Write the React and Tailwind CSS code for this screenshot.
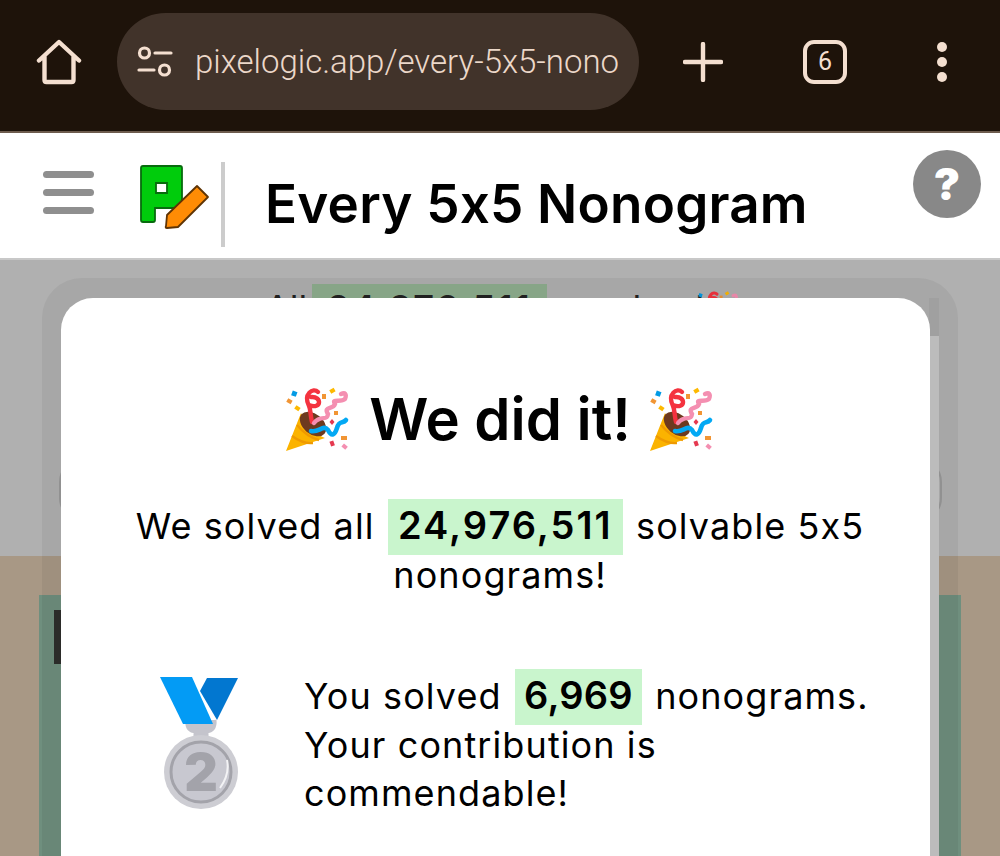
const Popper = ({ className }) => (
  <svg viewBox="0 0 66 66" className={className}>
    <path d="M1 65 L16 27 Q28 48 40 52 Z" fill="#fbb300" />
    <path d="M7 50 Q18 58 28 57 M12 39 Q22 51 34 54" stroke="#ef9a00" strokeWidth="2.400" fill="none" />
    <ellipse cx="28" cy="38" rx="15" ry="10" transform="rotate(40 28 38)" fill="#6d3a1f" />
    <path d="M27 36 C25 28 26 24 24 20 C18 8 28 1 33 6 M24 19 C37 24 37 10 26 11" stroke="#f4333f" strokeWidth="4.400" fill="none" strokeLinecap="round" />
    <path d="M29 37 C36 28 42 36 43 28 C38 20 48 24 50 18 C46 12 56 17 60 13 C62 8 60 6 56 8" stroke="#f48fb1" strokeWidth="4.400" fill="none" strokeLinecap="round" />
    <path d="M26 45 C34 47 38 38 43 44 C47 52 50 48 52 42 C54 34 58 38 61 34" stroke="#03a9f4" strokeWidth="4.600" fill="none" strokeLinecap="round" />
    <rect x="7" y="5" width="5" height="5" fill="#039be5" transform="rotate(20 9 7)" />
    <rect x="2" y="13" width="5" height="4" fill="#f19534" transform="rotate(30 4 15)" />
    <rect x="10" y="20" width="5" height="4" fill="#fdb900" transform="rotate(35 12 22)" />
    <rect x="37" y="8" width="4" height="5" fill="#f19534" />
    <rect x="45" y="3" width="5" height="4" fill="#fdb900" transform="rotate(-30 47 5)" />
    <rect x="49" y="25" width="4" height="4" fill="#f19534" />
    <path d="M47 33 L49.500 36 L47 39 L44.500 36 Z" fill="#e53950" />
    <rect x="56" y="50" width="6" height="4" fill="#f19534" />
    <rect x="45" y="55" width="4" height="5" fill="#e53950" transform="rotate(-20 47 57)" />
    <rect x="57" y="59" width="5" height="4" fill="#f48fb1" transform="rotate(40 60 61)" />
  </svg>
);

const Medal = ({ className }) => (
  <svg viewBox="0 0 80 134" className={className}>
    <path d="M47 2 L78 2 L57 44 L40 15 Z" fill="#0277d0" />
    <path d="M28 46 Q27 54 36 55 L36 62 L46 62 L46 55 Q55 54 54 44" stroke="#c4c4cc" strokeWidth="5" fill="#c4c4cc" />
    <path d="M0 1 L32 1 L53 48 L23 48 Z" fill="#039bf5" />
    <circle cx="41" cy="96" r="37" fill="#cdcdd3" />
    <circle cx="41" cy="96" r="30" fill="#c8c8d0" stroke="#a3a3aa" strokeWidth="3" />
    <path d="M67 84 Q70 98 60 112" stroke="#f3f3f5" strokeWidth="2" fill="none" />
    <text x="41" y="115" textAnchor="middle" fontSize="52" fontWeight="900" fill="#a3a3aa" fontFamily="Inter, sans-serif">2</text>
  </svg>
);

const Logo = () => (
  <svg viewBox="0 0 72 66" className="w-[72px] h-[66px]">
    <path d="M3 4 Q3 2 5 2 L42 2 Q44 2 44 4 L44 42 Q44 44 42 44 L17 44 L17 56 Q17 58 15 58 L5 58 Q3 58 3 56 Z M18 19 L18 29 L29 29 L29 19 Z" fill="#00cc0c" fillRule="evenodd" stroke="#086b0e" strokeWidth="1.800" />
    <path d="M59 22 L70 33 L40 63 L29 64 Q27 64 28 62 L29 51 Z" fill="#ff8c05" stroke="#5f3404" strokeWidth="1.800" strokeLinejoin="round" />
  </svg>
);

export default function App() {
  return (
    <div className="w-full h-[856px] flex flex-col overflow-hidden bg-white text-black font-['Inter',sans-serif] [font-feature-settings:'calt'_0]">
      {/* browser bar */}
      <div className="h-[133px] shrink-0 bg-[#1e130a] border-b-2 border-[#6d5c4e] flex items-center pl-[36px] pb-[8px] text-[#f4dfd0]">
        <svg viewBox="0 0 46 46" className="w-[46px] h-[46px]" fill="none" stroke="currentColor" strokeWidth="4.400" strokeLinejoin="round" strokeLinecap="round">
          <path d="M3 21.500 L23 3 L43 21.500 M8.500 17 L8.500 41 Q8.500 43 10.500 43 L35.500 43 Q37.500 43 37.500 41 L37.500 17" />
        </svg>
        <div className="ml-[35px] w-[522px] h-[97px] rounded-full bg-[#41332a] flex items-center pl-[20px] shrink-0">
          <svg viewBox="0 0 36 32" className="w-[36px] h-[32px] shrink-0" fill="none" stroke="currentColor" strokeWidth="3.200" strokeLinecap="round">
            <circle cx="7.500" cy="7" r="5" />
            <circle cx="27.500" cy="24" r="5" />
            <path d="M18 7 L34 7 M2 24 L17 24" />
          </svg>
          <div className="ml-[22px] w-[426px] overflow-hidden whitespace-nowrap text-[33px] font-['Roboto',sans-serif] font-light text-[#ecd8c9]">
            pixelogic.app/every-5x5-nono
          </div>
        </div>
        <svg viewBox="0 0 40 40" className="ml-[44px] w-[40px] h-[40px]" stroke="currentColor" strokeWidth="4.400" strokeLinecap="round">
          <path d="M20 2 L20 38 M2 20 L38 20" />
        </svg>
        <div className="ml-[80px] w-[44px] h-[44px] rounded-[11px] border-[4px] border-[#f4dfd0] flex items-center justify-center text-[25px] font-['Roboto',sans-serif] leading-none">
          6
        </div>
        <div className="ml-[90px] flex flex-col gap-[5px]">
          <div className="w-[10px] h-[10px] rounded-full bg-[#f4dfd0]" />
          <div className="w-[10px] h-[10px] rounded-full bg-[#f4dfd0]" />
          <div className="w-[10px] h-[10px] rounded-full bg-[#f4dfd0]" />
        </div>
      </div>

      {/* site header */}
      <div className="h-[127px] shrink-0 border-b-2 border-[#c8c8c8] flex pl-[43px] relative">
        <div className="flex flex-col gap-[11px] mt-[38px]">
          <div className="w-[51px] h-[7px] rounded-full bg-[#8f8f8f]" />
          <div className="w-[51px] h-[7px] rounded-full bg-[#8f8f8f]" />
          <div className="w-[51px] h-[7px] rounded-full bg-[#8f8f8f]" />
        </div>
        <div className="ml-[44px] mt-[31px]">
          <Logo />
        </div>
        <div className="ml-[11px] mt-[29px] w-[4px] h-[85px] bg-[#cccccc]" />
        <h1 className="ml-[40px] mt-[38px] text-[53px] leading-[66px] font-semibold tracking-[0.2px] whitespace-nowrap">Every 5x5 Nonogram</h1>
        <div className="absolute left-[913px] top-[17px] w-[68px] h-[68px] rounded-full bg-[#888888] flex items-center justify-center text-white text-[44px] font-black leading-none">
          ?
        </div>
      </div>

      {/* page behind the dialog */}
      <div className="relative flex-1 min-h-0 flex flex-col">
        <div className="h-[296px] shrink-0 bg-[#b0b0b0] overflow-hidden">
          <div className="ml-[265px] mt-[24px] flex items-start text-[36px] leading-[49px] text-[#222] whitespace-nowrap">
            <span className="w-[47px]">All</span>
            <span className="w-[235px] h-[56px] bg-[#8fae8f] text-center font-semibold tracking-[2px]">24,976,511</span>
            <span className="ml-[45px] w-[108px]">solved</span>
            <Popper className="w-[46px] h-[46px] mt-[6px] ml-[-6px]" />
          </div>
          <div className="ml-[59px] mt-[118px] w-[883px] h-[64px] rounded-[24px] border-2 border-[#999999]" />
        </div>
        <div className="flex-1 bg-[#a89885] px-[39px] pt-[39px]">
          <div className="h-full bg-[#6f8f7e] pl-[15px] pt-[15px]">
            <div className="w-[20px] h-[54px] bg-[#2e2e2c]" />
          </div>
        </div>

        {/* dialog shadow */}
        <div className="absolute left-[42px] right-[42px] top-[18px] bottom-0 rounded-t-[40px] bg-black/5" />

        {/* scrollbar */}
        <div className="absolute left-[929px] w-[10px] top-[38px] bottom-0 flex flex-col bg-[#bcbcbc]">
          <div className="h-[38px] bg-[#a0a0a0]" />
        </div>

        {/* dialog */}
        <div className="absolute left-[61px] w-[869px] top-[38px] bottom-0 rounded-t-[32px] overflow-hidden bg-white flex flex-col items-center pl-[9px]">
          <div className="mt-[88px] flex items-center gap-[18px]">
            <Popper className="w-[66px] h-[66px]" />
            <span className="text-[58px] leading-[66px] font-semibold whitespace-nowrap">We did it!</span>
            <Popper className="w-[66px] h-[66px]" />
          </div>
          <p className="mt-[50px] w-[760px] text-center text-[36px] leading-[49px] tracking-[1.1px]">
            We solved all{" "}
            <span className="bg-[#c9f5cd] font-semibold inline-block w-[235px] h-[56px] leading-[52px] mx-[2px] my-[-4px] text-[38px] tracking-[2px]">24,976,511</span>{" "}
            solvable 5x5 nonograms!
          </p>
          <div className="mt-[76px] w-full flex items-start pl-[90px]">
            <Medal className="w-[80px] h-[134px] shrink-0" />
            <p className="ml-[64px] w-[580px] text-[36px] leading-[48px] tracking-[1.1px] mt-[-4px]">
              You solved{" "}
              <span className="bg-[#c9f5cd] font-semibold inline-block w-[127px] text-center h-[56px] leading-[52px] mx-[2px] my-[-4px] text-[38px] tracking-[0.2px]">6,969</span>{" "}
              nonograms. Your contribution is commendable!
            </p>
          </div>
        </div>
      </div>
    </div>
  );
}
